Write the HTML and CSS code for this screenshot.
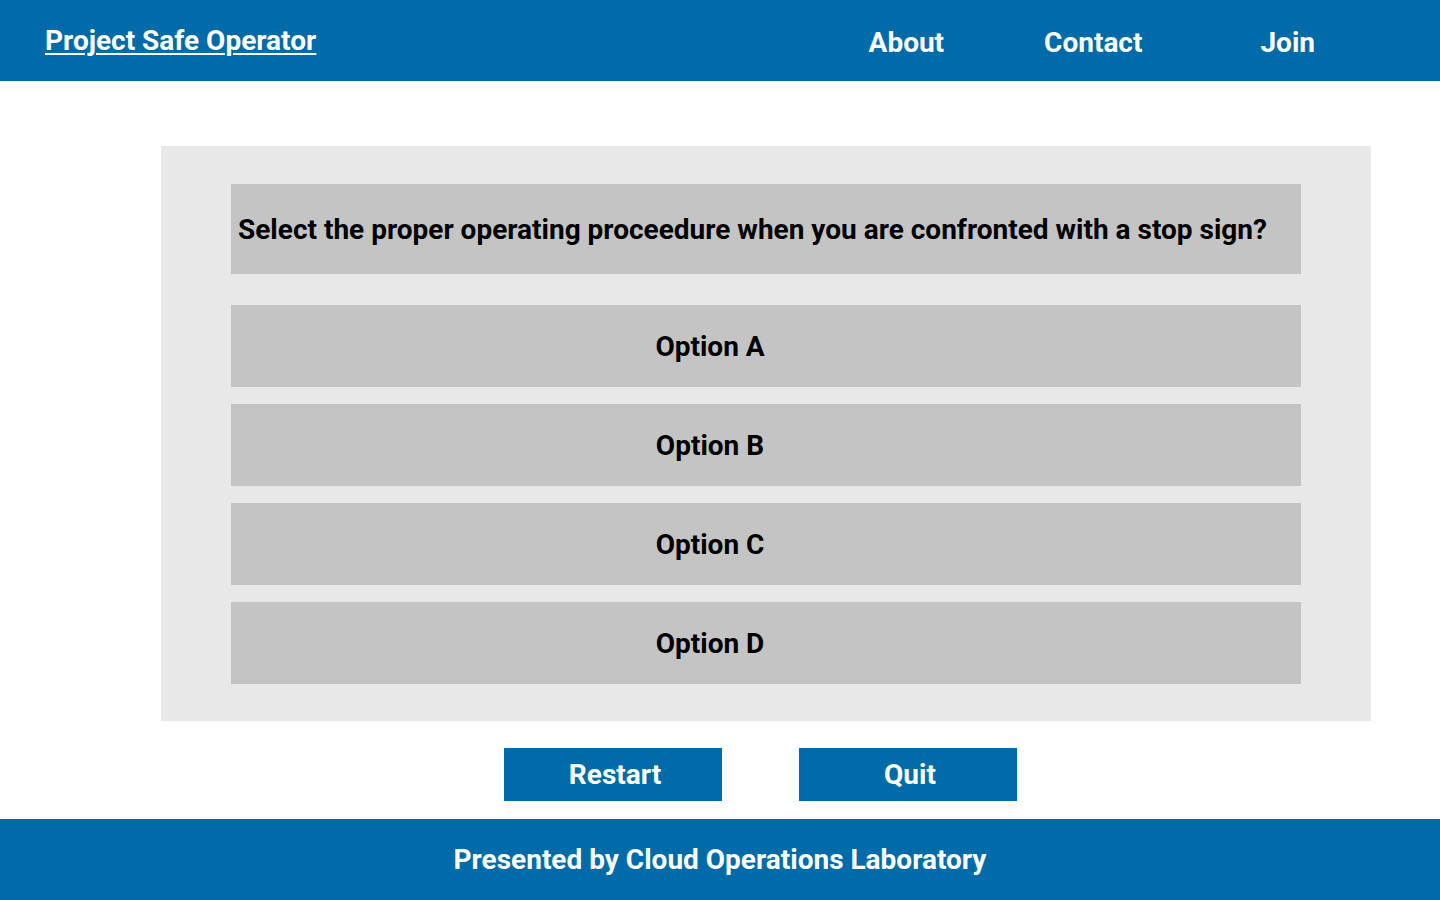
FILE: index.html
```html
<!DOCTYPE html>
<html>
<head>
<meta charset="utf-8">
<title>Project Safe Operator</title>
<link rel="stylesheet" href="styles.css">
</head>
<body>
<header class="topbar">
  <a class="brand" href="#">Project Safe Operator</a>
  <nav class="nav">
    <a class="nav-link nav-about" href="#">About</a>
    <a class="nav-link nav-contact" href="#">Contact</a>
    <a class="nav-link nav-join" href="#">Join</a>
  </nav>
</header>
<main class="main">
  <section class="panel">
    <div class="question">Select the proper operating proceedure when you are confronted with a stop sign?</div>
    <div class="options">
      <div class="option">Option A</div>
      <div class="option">Option B</div>
      <div class="option">Option C</div>
      <div class="option">Option D</div>
    </div>
  </section>
  <div class="actions">
    <button class="btn">Restart</button>
    <button class="btn">Quit</button>
  </div>
</main>
<footer class="footer">Presented by Cloud Operations Laboratory</footer>
</body>
</html>
```
FILE: styles.css
```css
* { box-sizing: border-box; }
html, body { margin: 0; padding: 0; }
body {
  font-family: Roboto, "Liberation Sans", Arial, sans-serif;
  font-weight: 700;
  background: #ffffff;
  color: #000;
  width: 1440px;
  height: 900px;
  display: flex;
  flex-direction: column;
}
.topbar {
  height: 81px;
  background: #006ba8;
  display: flex;
  align-items: center;
  padding-left: 45px;
}
.brand {
  color: #fff;
  font-size: 28px;
  text-decoration: underline;
  text-underline-offset: 3px;
  text-decoration-thickness: 2px;
  margin-top: 0;
}
.nav {
  display: flex;
  margin-left: auto;
  padding-right: 125px;
}
.nav-link {
  color: #fff;
  text-decoration: none;
  font-size: 28px;
  margin-top: 4px;
}
.nav-contact { margin-left: 100px; }
.nav-join { margin-left: 118px; }
.main {
  flex: 1;
  display: flex;
  flex-direction: column;
  padding-top: 65px;
}
.panel {
  margin-left: 161px;
  width: 1210px;
  background: #e8e8e8;
  padding: 38px 70px 37px;
}
.question {
  height: 90px;
  background: #c4c4c4;
  display: flex;
  align-items: center;
  padding-left: 7px;
  font-size: 28px;
}
.options {
  margin-top: 31px;
  display: flex;
  flex-direction: column;
  gap: 17px;
}
.option {
  height: 82px;
  background: #c4c4c4;
  display: flex;
  align-items: center;
  justify-content: center;
  padding-right: 112px;
  font-size: 28px;
}
.actions {
  display: flex;
  justify-content: center;
  gap: 77px;
  margin-top: 27px;
  padding-left: 81px;
}
.btn {
  width: 218px;
  height: 53px;
  border: none;
  background: #006ba8;
  color: #fff;
  font-family: Roboto, "Liberation Sans", Arial, sans-serif;
  font-weight: 700;
  font-size: 28px;
  padding: 0 0 0 4px;
}
.footer {
  height: 81px;
  background: #006ba8;
  color: #fff;
  font-size: 28px;
  display: flex;
  align-items: center;
  justify-content: center;
}
```
